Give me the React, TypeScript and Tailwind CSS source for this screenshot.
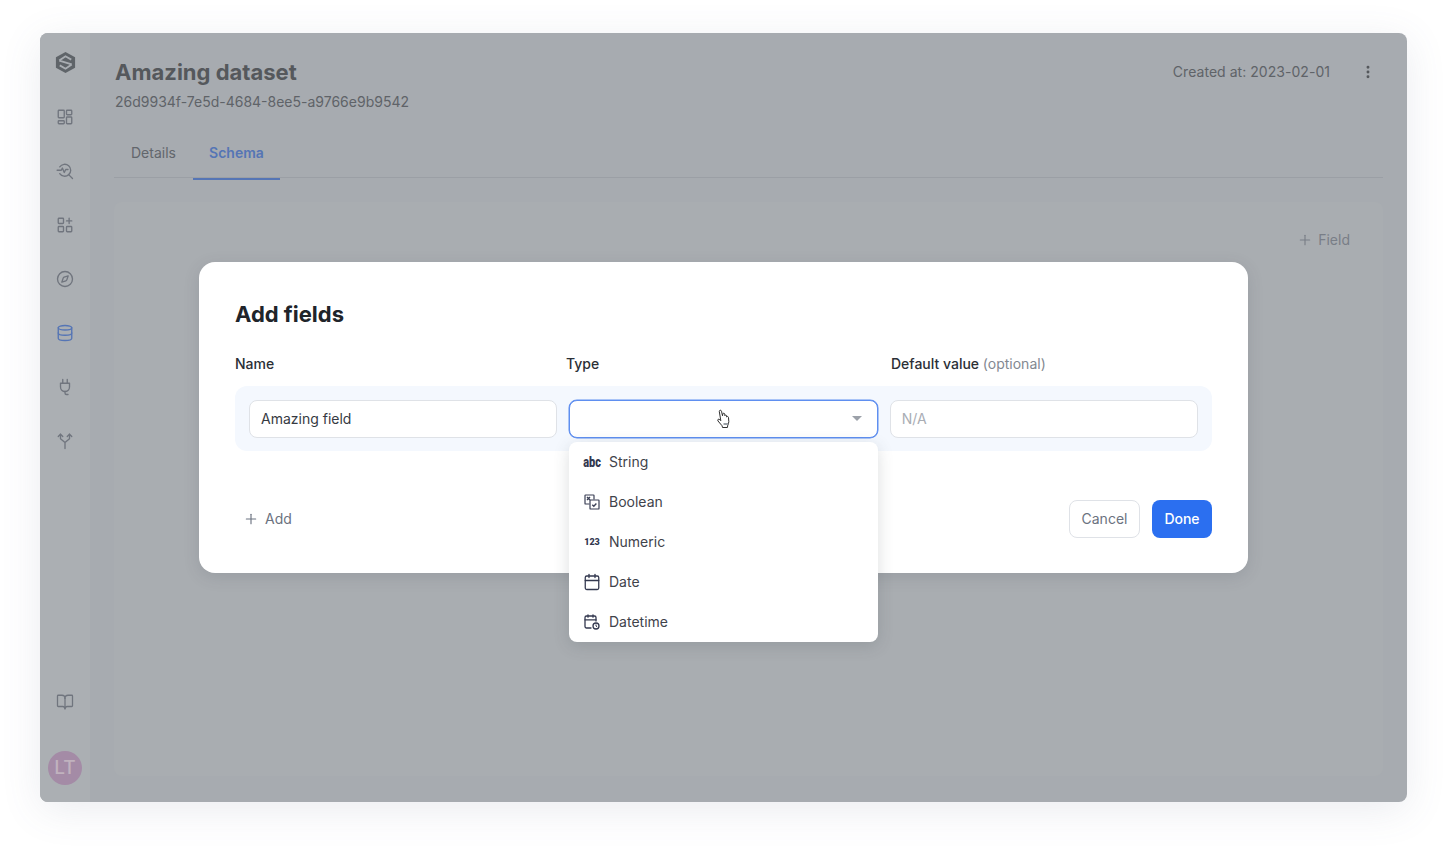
import React from "react";
import { Plus, EllipsisVertical, Compass, Database, BookOpen, Calendar } from "lucide-react";

const Stroke = ({ children }: { children: React.ReactNode }) => (
  <svg viewBox="0 0 24 24" fill="none" stroke="currentColor" strokeWidth="1.8" strokeLinecap="round" strokeLinejoin="round" className="h-[18px] w-[18px]">
    {children}
  </svg>
);

const Logo = () => (
  <svg viewBox="0 0 24 24" className="h-[23px] w-[23px]">
    <path d="M12 1 L22 6.5 V17.5 L12 23 L2 17.5 V6.5 Z" fill="#5f6469" />
    <path d="M5.500 10 L12 5.500 L18 9 M18.500 14 L12 18.500 L6 15 M5.500 10 L18.500 14" fill="none" stroke="#a9adb2" strokeWidth="2" />
  </svg>
);

const DashIcon = () => (
  <Stroke>
    <rect x="3" y="3" width="8" height="10" rx="1" />
    <rect x="14" y="3" width="7" height="6" rx="1" />
    <rect x="14" y="12" width="7" height="9" rx="1" />
    <rect x="3" y="17" width="8" height="4" rx="1" />
  </Stroke>
);

const SearchIcon = () => (
  <Stroke>
    <path d="M5 6.500A8 8 0 1 1 5 15.500" />
    <path d="M16.500 16.500 22 22" />
    <path d="M1.500 11H7l1.500-3 2.500 6 2-4h3" />
  </Stroke>
);

const GridPlusIcon = () => (
  <Stroke>
    <rect x="3" y="3" width="7" height="7" rx="1" />
    <rect x="3" y="14" width="7" height="7" rx="1" />
    <rect x="14" y="14" width="7" height="7" rx="1" />
    <path d="M17.500 3v7M14 6.500h7" />
  </Stroke>
);

const PlugIcon = () => (
  <Stroke>
    <path d="M9 2v5M15 2v5M6 7h12v5a6 6 0 0 1-6 6 6 6 0 0 1-6-6z" />
    <path d="M12 18v2a2 2 0 0 0 2 2h2" />
  </Stroke>
);

const ForkIcon = () => (
  <Stroke>
    <path d="M12 22v-8M12 14 6 9V3M12 14l6-5V3" />
    <path d="m3 6 3-3 3 3M15 6l3-3 3 3" />
  </Stroke>
);

const BooleanIcon = () => (
  <svg viewBox="0 0 16 16" fill="none" stroke="#3a3f55" strokeWidth="1.2" className="h-4 w-4">
    <path d="M10 5.500V1.600a.6.6 0 0 0-.6-.6H1.600a.6.6 0 0 0-.6.6v7.800c0 .3.3.6.6.6H5.500" />
    <rect x="6" y="6" width="9" height="9" rx=".6" />
    <path strokeWidth="1.4" d="m3 3 3 3M6 3l-3 3M8.300 10.800l1.500 1.500 2.600-2.800" />
  </svg>
);

const DatetimeIcon = () => (
  <svg viewBox="0 0 16 16" fill="none" stroke="#33384f" strokeWidth="1.3" strokeLinecap="round" className="h-4 w-4">
    <path d="M7 14H2.500A1.500 1.500 0 0 1 1 12.500V3.500A1.500 1.500 0 0 1 2.500 2h8A1.500 1.500 0 0 1 12 3.500V7" />
    <path d="M4 .8v2.400M9 .8v2.400M1 5.800h11" />
    <circle cx="12" cy="12" r="3" />
    <path strokeWidth="1" d="M12 10.800V12l.8.6" />
  </svg>
);

const HandCursor = () => (
  <svg viewBox="0 0 16 20" className="h-5 w-4">
    <path
      d="M3.300 2.500c-.2-1.500 1.900-1.800 2.200-.3l1 4.600.3-1.800c.2-1.200 1.900-1 1.900.2l.1 1.500c.3-1 1.800-.8 1.800.3l.1 1c.4-.8 1.700-.6 1.800.5l.3 4.200c0 1.500-.6 2.500-1 3.400l-.4 2.400H6.500l-.4-1.700-4.100-4.800c-.9-1.300.5-2.600 1.800-1.300l1 1z"
      fill="#fff"
      stroke="#2f2f2f"
      strokeWidth="1"
      strokeLinejoin="round"
    />
    <rect x="7.500" y="14" width="4.500" height="2" fill="#9aa0a6" />
  </svg>
);

const navTop = [
  { key: "dash", icon: <DashIcon /> },
  { key: "search", icon: <SearchIcon /> },
  { key: "grid", icon: <GridPlusIcon /> },
  { key: "compass", icon: <Compass className="h-[18px] w-[18px]" strokeWidth={1.8} /> },
  { key: "db", icon: <Database className="h-[18px] w-[18px]" strokeWidth={1.8} />, active: true },
  { key: "plug", icon: <PlugIcon /> },
  { key: "fork", icon: <ForkIcon /> },
];

const typeOptions = [
  { label: "String", icon: <span className="scale-y-125 font-['Roboto',sans-serif] text-[11px] leading-none font-black">abc</span> },
  { label: "Boolean", icon: <BooleanIcon /> },
  { label: "Numeric", icon: <span className="font-['Roboto',sans-serif] text-[9px] leading-none font-black">123</span> },
  { label: "Date", icon: <Calendar className="h-[18px] w-[18px] shrink-0" strokeWidth={1.7} /> },
  { label: "Datetime", icon: <DatetimeIcon /> },
];

export default function App() {
  return (
    <div className="min-h-[849px] bg-white px-10 pt-[33px] font-['Inter',sans-serif]">
      <div className="relative flex h-[769px] overflow-hidden rounded-lg bg-[#a7abb0] shadow-[0_8px_40px_rgba(90,100,130,0.12)]">
        {/* Sidebar */}
        <aside className="flex w-[50px] shrink-0 flex-col items-center bg-[#abafb3] pt-[18px] pb-[17px] text-[#70757e]">
          <Logo />
          <nav className="mt-[34px] flex flex-col items-center gap-9">
            {navTop.map((item) => (
              <span key={item.key} className={item.active ? "text-[#5575b5]" : ""}>
                {item.icon}
              </span>
            ))}
          </nav>
          <BookOpen className="mt-auto h-[18px] w-[18px]" strokeWidth={1.7} />
          <div className="mt-10 flex h-[34px] w-[34px] items-center justify-center rounded-full bg-[#a48ba6] pt-px text-[19px] font-medium text-[#c0b2be]">
            LT
          </div>
        </aside>

        {/* Page behind the dialog */}
        <main className="flex min-w-0 flex-1 flex-col pt-[24px] pr-6 pl-6">
          <div className="flex items-start justify-between">
            <div className="pl-px">
              <h1 className="text-[22px] leading-[30px] font-bold text-[#55585c]">Amazing dataset</h1>
              <p className="mt-[5px] text-sm leading-5 text-[#5f6368]">26d9934f-7e5d-4684-8ee5-a9766e9b9542</p>
            </div>
            <div className="flex items-center gap-[30px] pt-[5px] pr-[7px] text-[#5f6368]">
              <span className="text-sm leading-5 tracking-[0.04px]">Created at: 2023-02-01</span>
              <EllipsisVertical className="h-4 w-4 text-[#55585c]" strokeWidth={2.4} />
            </div>
          </div>

          <div className="mt-[18px] flex border-b border-[#9b9fa5] text-sm">
            <span className="flex h-[47px] w-[79px] items-center justify-center pb-[2px] text-[#62666c]">Details</span>
            <span className="-mb-[3px] flex h-[50px] w-[87px] items-center justify-center border-b-2 border-[#5575b5] pb-[3px] font-semibold text-[#5575b5]">Schema</span>
          </div>

          <section className="mt-6 flex h-[574px] justify-end rounded-lg bg-[#a9adb1] pt-[28px] pr-[33px] text-sm text-[#797e87]">
            <span className="flex h-5 items-center gap-[5px]">
              <Plus className="h-4 w-4" strokeWidth={1.7} />
              Field
            </span>
          </section>
        </main>

        {/* Dialog */}
        <div className="absolute top-[229px] left-[159px] flex h-[311px] w-[1049px] flex-col rounded-2xl bg-white px-9 pt-[38px] pb-[35px] shadow-[0_4px_16px_rgba(60,70,80,0.15)]">
          <h2 className="text-[22px] leading-[28px] font-bold text-[#20242a]">Add fields</h2>
          <div className="mt-[26px] grid grid-cols-[331px_325px_1fr] text-sm leading-5 font-medium text-[#2b2f36]">
            <span>Name</span>
            <span>Type</span>
            <span>
              Default value <span className="font-normal text-[#838891]">(optional)</span>
            </span>
          </div>
          <div className="mt-3 grid h-[65px] grid-cols-3 items-center gap-3 rounded-xl bg-[#f4f8fe] px-[14px] text-sm">
            <div className="flex h-[38px] items-center rounded-lg border border-[#dfe2e7] bg-white px-[11px] text-[#363a42]">Amazing field</div>
            <div className="flex h-[38px] items-center justify-between rounded-lg border border-[#5f8ff0] bg-white pr-[15px] pl-[146px] shadow-[0_0_0_0.5px_#5f8ff0]">
              <HandCursor />
              <span className="h-0 w-0 border-x-[5px] border-t-[5px] border-x-transparent border-t-[#9ca1a9]" />
            </div>
            <div className="flex h-[38px] items-center rounded-lg border border-[#dfe2e7] bg-white px-[11px] text-[#a9adb4]">N/A</div>
          </div>
          <div className="mt-auto flex items-center justify-between text-sm">
            <span className="flex items-center gap-[6px] pl-2 text-[#6b7280]">
              <Plus className="h-4 w-4" strokeWidth={1.7} />
              Add
            </span>
            <div className="flex gap-3">
              <button className="flex h-[38px] w-[71px] items-center justify-center rounded-lg border border-[#dfe2e7] bg-white text-[#6b7280]">Cancel</button>
              <button className="flex h-[38px] w-[60px] items-center justify-center rounded-lg bg-[#2b6ff0] font-medium text-white">Done</button>
            </div>
          </div>
        </div>

        {/* Type dropdown */}
        <ul className="absolute top-[409px] left-[529px] w-[309px] rounded-lg bg-white shadow-[0_4px_16px_rgba(60,70,80,0.18)]">
          {typeOptions.map((opt) => (
            <li key={opt.label} className="flex h-10 items-center gap-[9px] px-[15px] text-sm text-[#3f434b]">
              <span className="flex w-4 items-center justify-center text-[#33384f]">{opt.icon}</span>
              {opt.label}
            </li>
          ))}
        </ul>
      </div>
    </div>
  );
}
